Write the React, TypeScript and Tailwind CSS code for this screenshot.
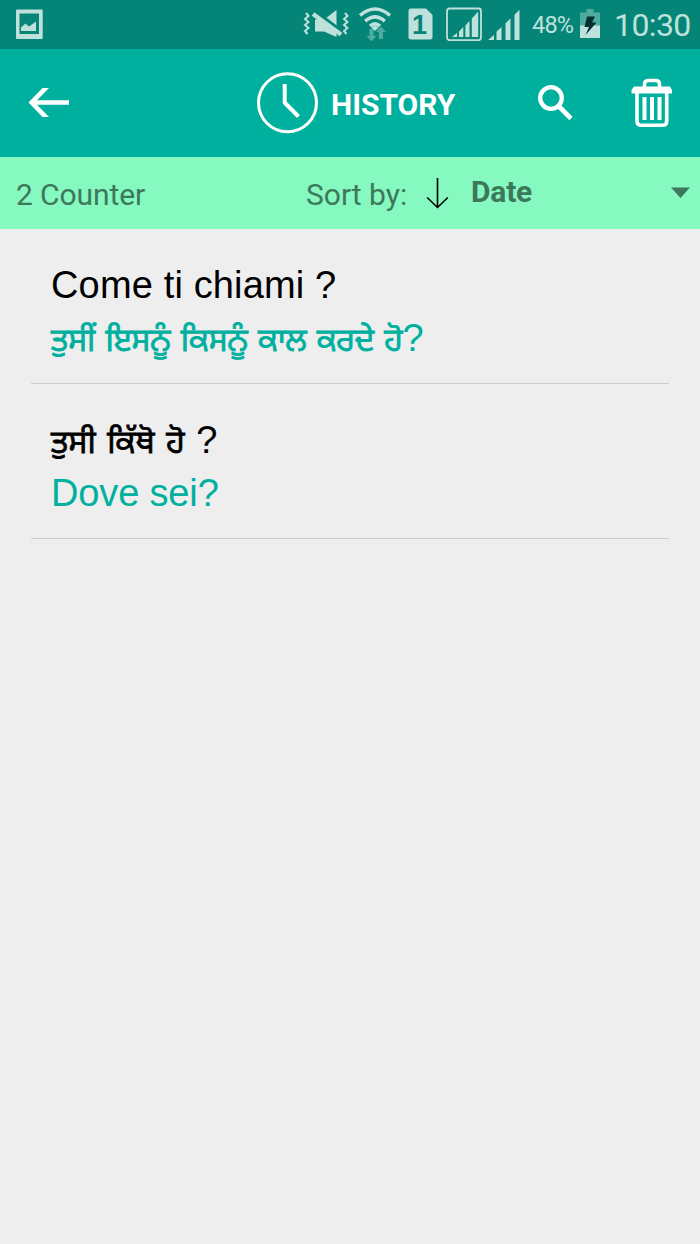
type HistoryEntry = {
    id: number;
    source: string;
    translation: string;
    sourceClass: string;
    translationClass: string;
};

const entries: HistoryEntry[] = [
    {
        id: 1,
        source: "Come ti chiami ?",
        translation: "ਤੁਸੀਂ ਇਸਨੂੰ ਕਿਸਨੂੰ ਕਾਲ ਕਰਦੇ ਹੋ?",
        sourceClass: "tracking-[0.15px]",
        translationClass: "tracking-[-0.3px]",
    },
    {
        id: 2,
        source: "ਤੁਸੀ ਕਿੱਥੋ ਹੋ ?",
        translation: "Dove sei?",
        sourceClass: "[word-spacing:1px]",
        translationClass: "tracking-[-0.15px]",
    },
];

const PictureIcon = () => (
    <svg className="mt-[9px] ml-4 h-[30px] w-[27px]" viewBox="0 0 27 30" fill="currentColor">
        <path fillRule="evenodd" d="M1 0.5H26Q26.7 .5 26.7 1.2V29Q26.7 30 25.8 30H1Q0 30 0 29V1.5Q0 .5 1 .5ZM3.5 4.5V25H23V4.5Z" />
        <path d="M5 22V18.5L9.5 14.5L13 17.5L20 12.5V22Z" />
    </svg>
);

const MuteIcon = () => (
    <svg className="mt-[9px] ml-[260px] h-[30px] w-[46px]" viewBox="0 0 46 30" fill="none" stroke="currentColor">
        <path d="M12 10.5H21L33.5 1V28L21 22.5H12Z" fill="currentColor" stroke="none" />
        <path d="M11 2.5L39 23.5" stroke="#048577" strokeWidth="5" />
        <path d="M10 5L38 25.5" strokeWidth="4.2" />
        <path d="M3 4L5.5 7L2 10L5.5 13L2 16L5.5 19L2 22L4.5 25M42 4L44.5 7L41 10L44.5 13L41 16L44.5 19L41 22L43.5 25" strokeWidth="2" />
    </svg>
);

const WifiIcon = () => (
    <svg className="mt-[7px] ml-[10px] h-[35px] w-[32px]" viewBox="0 0 32 35" fill="none" stroke="currentColor">
        <path d="M1 8.5Q16-4.5 31 8.5M6.2 14.2Q16 5.7 25.8 14.2M11 19Q16 14.7 21 19" strokeWidth="3.6" />
        <path d="M12.2 20.5Q16 17.5 19.8 20.5L16 24Z" fill="currentColor" stroke="none" />
        <path d="M10.5 22H14.5V29H17.5L12.5 34.5L7.5 29H10.5ZM19.8 32V25H17L22 19.5L27 25H24V32Z" fill="#4faa9f" stroke="none" />
    </svg>
);

const SimIcon = () => (
    <svg className="mt-[8px] ml-[17px] h-8 w-[25px]" viewBox="0 0 25 32">
        <path d="M3 .5H18L24.5 7V29Q24.5 31.5 22 31.5H3Q0.5 31.5 .5 29V3Q.5.5 3 .5Z" fill="currentColor" />
        <text x="11.5" y="25.5" textAnchor="middle" className="fill-[#048577] font-['Liberation_Sans',sans-serif] text-[27px] font-bold">1</text>
    </svg>
);

const BoxedSignalIcon = () => (
    <svg className="mt-[7px] ml-[13px] h-[35px] w-9" viewBox="0 0 36 35">
        <rect x="1" y="1.5" width="34" height="31.6" rx="2.5" fill="none" stroke="currentColor" strokeWidth="1.8" />
        <path d="M6 30L11 26V30ZM13 30V24.5L17.3 20V30ZM19.4 30V18.5L23.5 14V30ZM25.8 30V11.5L32.2 4.5V30Z" fill="currentColor" />
    </svg>
);

const SignalIcon = () => (
    <svg className="mt-[9px] ml-[6px] h-8 w-8" viewBox="0 0 32 32" fill="currentColor">
        <path d="M0 31L6 26V31ZM8.5 31V22.8L13.5 18V31ZM17.5 31V14.2L22.5 9.5V31ZM26.5 31V5.7L31.5 .7V31Z" />
    </svg>
);

const BatteryIcon = () => (
    <svg className="mt-[9px] ml-[6px] h-[29px] w-5" viewBox="0 0 20 29">
        <path d="M0 3.5H6.5V0H13.5V3.5H20V29H0Z" fill="#4faa9f" />
        <path d="M0 16.5H20V29H0Z" fill="currentColor" />
        <path d="M7 7.5H15L12 13.5H16.5L5.5 26L9 18H4.5Z" fill="#03302c" />
    </svg>
);

const StatusBar = () => (
    <div className="flex h-[49px] items-start bg-[#048577] text-[#bfe1dc]">
        <PictureIcon />
        <MuteIcon />
        <WifiIcon />
        <SimIcon />
        <BoxedSignalIcon />
        <SignalIcon />
        <span className="mt-[8px] ml-[12px] w-[42px] text-[23.5px] leading-[34px] tracking-[-0.8px] whitespace-nowrap">48%</span>
        <BatteryIcon />
        <span className="mt-[5px] ml-[14px] text-[32px] leading-10 tracking-[-0.6px] whitespace-nowrap">10:30</span>
    </div>
);

const Header = () => (
    <header className="flex h-[108px] items-start bg-[#00b09f] text-white">
        <button aria-label="Back" className="mt-[39px] ml-7">
            <svg className="h-[30px] w-[42px]" viewBox="0 0 42 30" fill="currentColor">
                <path d="M0.5 14.5L14.5 0H21L9 12.3H41V16.7H9L21 29H14.5Z" />
            </svg>
        </button>
        <svg className="mt-[23px] ml-[187px] h-[62px] w-[62px]" viewBox="0 0 62 62" fill="none" stroke="currentColor">
            <circle cx="30.5" cy="30.7" r="29" strokeWidth="3" />
            <path d="M27.7 12V31" strokeWidth="4" />
            <path d="M27 30L41.5 44.5" strokeWidth="4" />
        </svg>
        <h1 className="mt-[36px] ml-[12px] w-[126px] text-[30px] leading-10 font-bold whitespace-nowrap">HISTORY</h1>
        <button aria-label="Search" className="mt-[35px] ml-[80px]">
            <svg className="h-[37px] w-[36px]" viewBox="0 0 36 37" fill="none" stroke="currentColor">
                <circle cx="14" cy="14" r="10.8" strokeWidth="4.3" />
                <path d="M21 21.5L34 34.5" strokeWidth="4.6" />
            </svg>
        </button>
        <button aria-label="Delete all" className="mt-[29px] ml-[58px]">
            <svg className="h-[51px] w-[42px]" viewBox="0 0 42 51" fill="none" stroke="currentColor">
                <path d="M13.5 10V6.5Q13.5 2.5 17 2.5H25Q28.5 2.5 28.5 6.5V10" strokeWidth="3.6" />
                <path d="M3 8.5H39L41 12V15.5H.5V12Z" fill="currentColor" stroke="none" />
                <path d="M6 13V43Q6 47.3 10 47.3H31.5Q35.7 47.3 35.7 43V13" strokeWidth="3.6" />
                <path d="M13.5 19V42M21 19V42M28.5 19V42" strokeWidth="4" />
            </svg>
        </button>
    </header>
);

const SortBar = () => (
    <div className="flex h-[72px] items-start bg-[#85f9bf] text-[#3e785c]">
        <span className="mt-[18px] ml-[16px] w-[290px] text-[30px] leading-10 tracking-[-0.1px] whitespace-nowrap">2 Counter</span>
        <span className="mt-[18px] w-[120px] text-[30px] leading-10 whitespace-nowrap">Sort by:</span>
        <svg className="mt-[20px] h-8 w-6" viewBox="0 0 24 32" fill="none" stroke="#000">
            <path d="M11.5 1V31M1.2 20.5L11.5 30.5L21.8 20.5" strokeWidth="1.6" />
        </svg>
        <span className="mt-[15px] ml-[21px] w-[200px] text-[30px] leading-10 font-bold tracking-[-0.2px] whitespace-nowrap">Date</span>
        <svg className="mt-[30px] h-[11px] w-[19px]" viewBox="0 0 19 11" fill="currentColor">
            <path d="M0 .5H19L9.5 11Z" />
        </svg>
    </div>
);

/* Gurmukhi words are drawn smaller and heavier than the latin letters and punctuation */
const Phrase: React.FC<{ text: string }> = ({ text }) => (
    <>
        {text.split(/([\u0A00-\u0A7F]+)/).map((part, index) =>
            /[\u0A00-\u0A7F]/.test(part) ? (
                <span key={index} className="font-['Noto_Sans_Gurmukhi',sans-serif] text-[32px] [-webkit-text-stroke:0.8px_currentColor]">
                    {part}
                </span>
            ) : (
                <span key={index}>{part}</span>
            )
        )}
    </>
);

const HistoryItem: React.FC<{ entry: HistoryEntry }> = ({ entry }) => {
    return (
        <li className="h-[155px] border-b border-[#cdcdcd] px-5 pt-[32px] font-['Liberation_Sans',sans-serif] text-[38px]">
            <p className={`h-[53px] leading-[48px] whitespace-nowrap text-black ${entry.sourceClass}`}>
                <Phrase text={entry.source} />
            </p>
            <p className={`h-[53px] leading-[48px] whitespace-nowrap text-[#00b09f] ${entry.translationClass}`}>
                <Phrase text={entry.translation} />
            </p>
        </li>
    );
};

const App = () => {
    return (
        <div className="h-[1244px] w-[700px] overflow-hidden bg-[#eeeeee] font-['Roboto',sans-serif]">
            <StatusBar />
            <Header />
            <SortBar />
            <ul className="mx-[31px]">
                {entries.map((entry) => (
                    <HistoryItem key={entry.id} entry={entry} />
                ))}
            </ul>
        </div>
    );
};

export default App;
